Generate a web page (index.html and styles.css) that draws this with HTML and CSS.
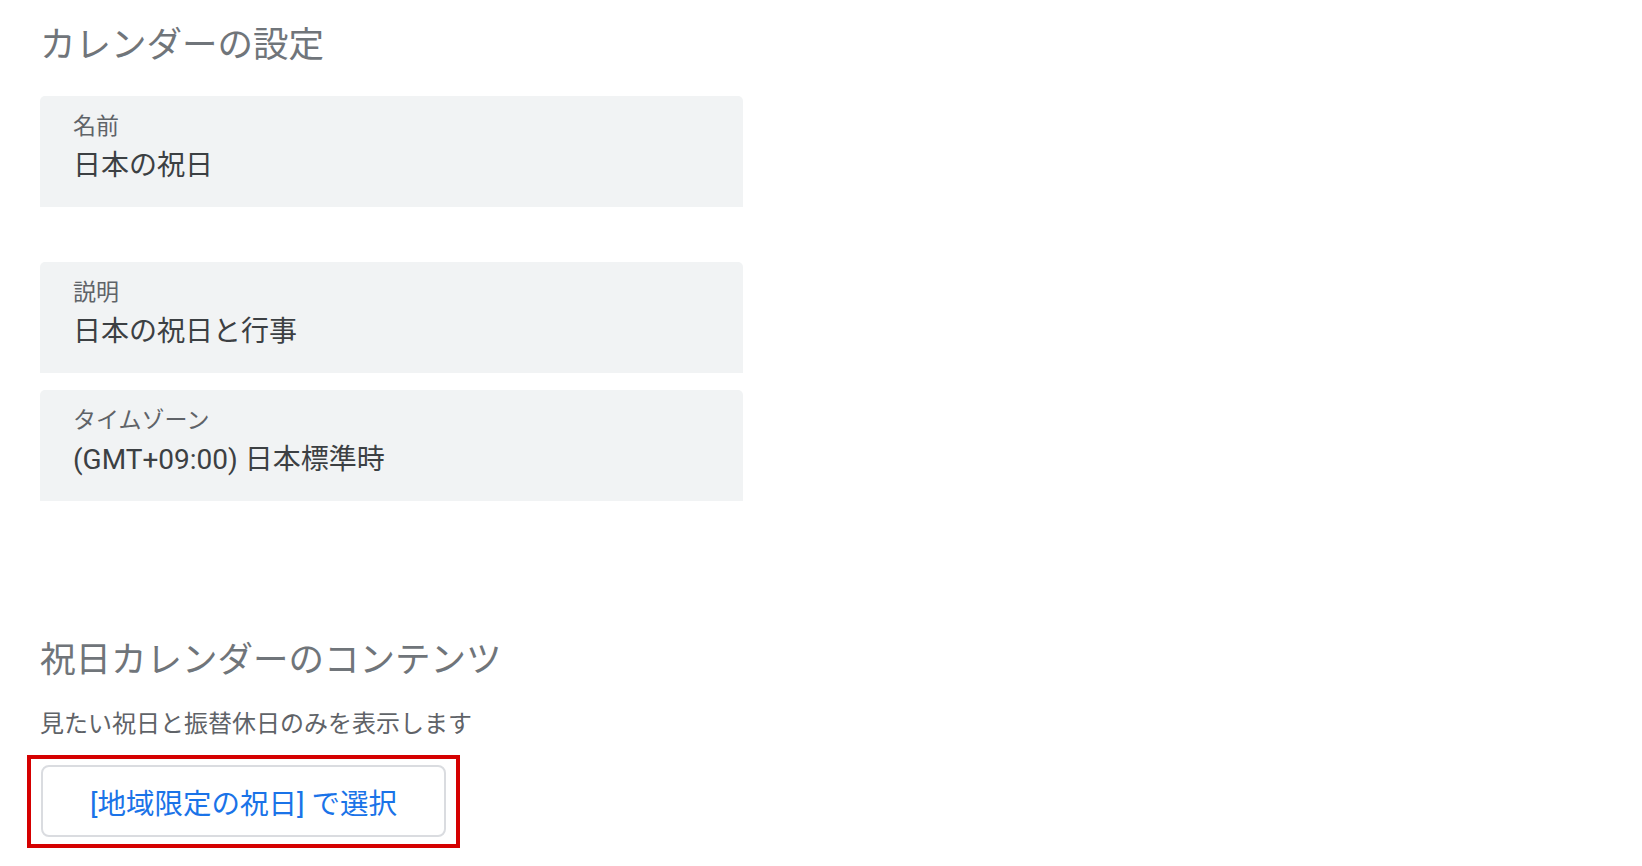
FILE: index.html
```html
<!DOCTYPE html>
<html lang="ja">
<head>
    <meta charset="UTF-8">
    <meta name="viewport" content="width=device-width, initial-scale=1.0">
    <title>カレンダーの設定</title>
    <link rel="stylesheet" href="styles.css">
</head>
<body>
    <div class="page">
        <h1 class="section-title">カレンダーの設定</h1>

        <div class="field field-name">
            <div class="field-label">名前</div>
            <div class="field-value">日本の祝日</div>
        </div>

        <div class="field field-desc">
            <div class="field-label">説明</div>
            <div class="field-value">日本の祝日と行事</div>
        </div>

        <div class="field field-tz">
            <div class="field-label">タイムゾーン</div>
            <div class="field-value">(GMT+09:00) 日本標準時</div>
        </div>

        <h2 class="section-title section-holidays">祝日カレンダーのコンテンツ</h2>
        <p class="section-note">見たい祝日と振替休日のみを表示します</p>

        <div class="highlight">
            <button type="button" class="select-button">[地域限定の祝日] で選択</button>
        </div>
    </div>
</body>
</html>
```

FILE: styles.css
```css
body {
    margin: 0;
    background-color: #ffffff;
    font-family: Roboto, "Noto Sans CJK JP", sans-serif;
}
.page {
    padding: 23px 0 0 40px;
    width: 703px;
}
.section-title {
    margin: 0;
    font-size: 35.5px;
    font-weight: 400;
    line-height: 44px;
    color: #70757a;
}
.field {
    box-sizing: border-box;
    height: 111px;
    padding: 16px 33px 0;
    background-color: #f1f3f4;
    border-radius: 5px 5px 0 0;
}
.field-name {
    margin-top: 29px;
}
.field-desc {
    margin-top: 55px;
}
.field-tz {
    margin-top: 17px;
}
.field-label {
    font-size: 23px;
    line-height: 30px;
    color: #5f6368;
}
.field-value {
    margin-top: 6px;
    font-size: 28px;
    line-height: 36px;
    color: #3c4043;
}
.section-holidays {
    margin-top: 137px;
}
.section-note {
    margin: 27px 0 0;
    font-size: 24px;
    line-height: 30px;
    color: #5f6368;
}
.highlight {
    display: inline-block;
    margin: 16px 0 0 -13px;
    padding: 6px 10px 7px 10px;
    border: 4px solid #d50000;
}
.select-button {
    display: block;
    width: 405px;
    height: 72px;
    padding: 0;
    font-family: Roboto, "Noto Sans CJK JP", sans-serif;
    font-size: 28.5px;
    color: #1a73e8;
    background-color: #ffffff;
    border: 2px solid #dadce0;
    border-radius: 8px;
    cursor: pointer;
}
```
